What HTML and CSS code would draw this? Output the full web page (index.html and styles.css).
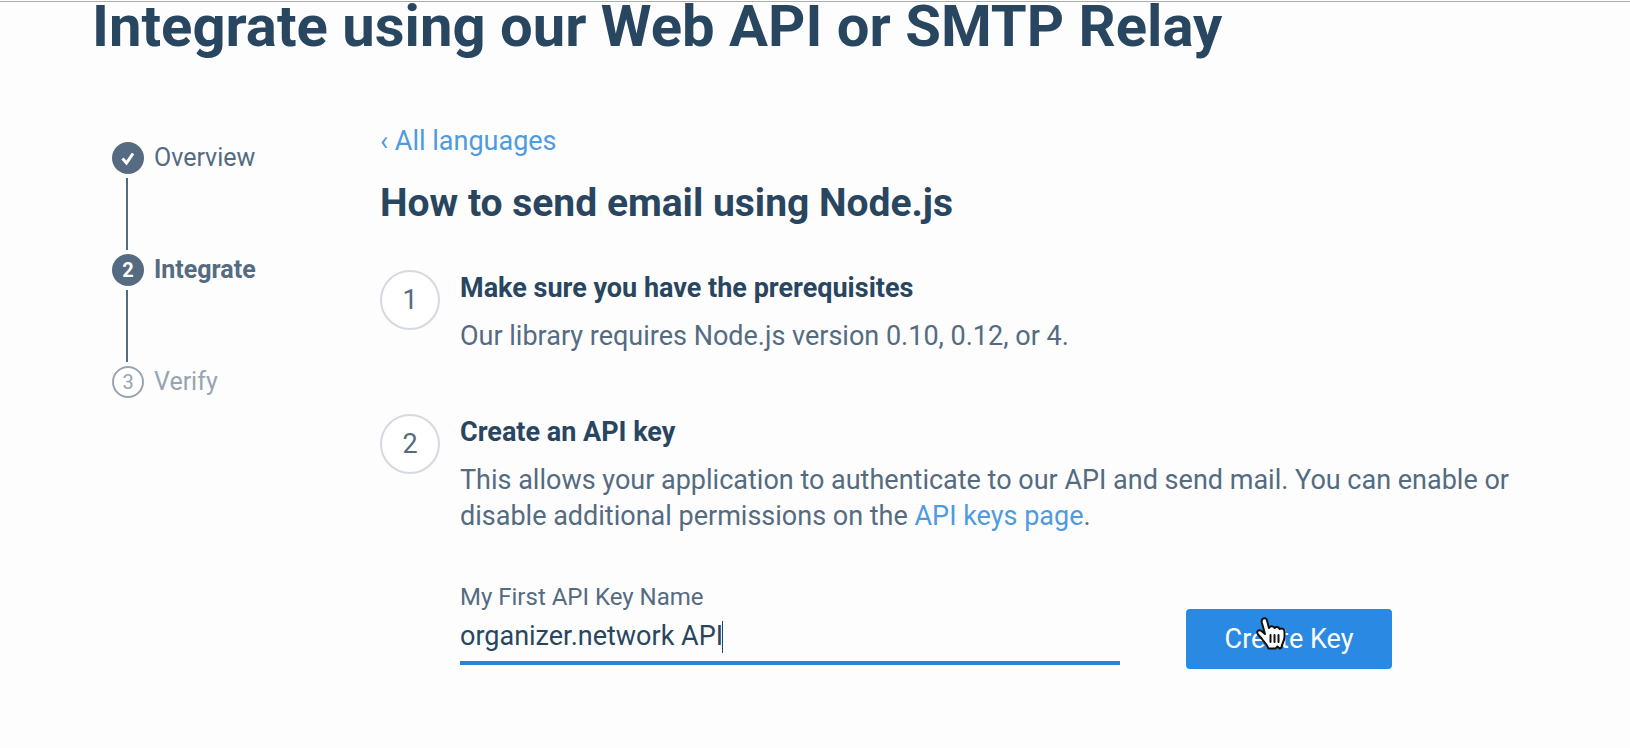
FILE: index.html
```html
<!DOCTYPE html>
<html lang="en">
<head>
<meta charset="utf-8">
<meta name="viewport" content="width=device-width, initial-scale=1">
<title>Integrate using our Web API or SMTP Relay</title>
<link rel="stylesheet" href="styles.css">
</head>
<body>
<div class="page">
  <h1 class="page-title">Integrate using our Web API or SMTP Relay</h1>
  <div class="layout">
    <nav aria-label="Setup progress">
      <ol class="progress">
        <li class="progress-item">
          <span class="progress-dot">
            <svg width="32" height="32" viewBox="0 0 32 32" aria-hidden="true"><path d="M10.500 16.500l4 4.500 6.500-9.500" fill="none" stroke="currentColor" stroke-width="3"/></svg>
          </span>
          <span>Overview</span>
        </li>
        <li class="progress-item current" aria-current="step">
          <span class="progress-dot">2</span>
          <span>Integrate</span>
        </li>
        <li class="progress-item upcoming">
          <span class="progress-dot">3</span>
          <span>Verify</span>
        </li>
      </ol>
    </nav>
    <main>
      <a class="link back" href="#">‹ All languages</a>
      <h2 class="guide-title">How to send email using Node.js</h2>
      <section class="step">
        <span class="step-number">1</span>
        <div>
          <h3 class="step-title">Make sure you have the prerequisites</h3>
          <p class="step-text">Our library requires Node.js version 0.10, 0.12, or 4.</p>
        </div>
      </section>
      <section class="step">
        <span class="step-number">2</span>
        <div>
          <h3 class="step-title">Create an API key</h3>
          <p class="step-text">This allows your application to authenticate to our API and send mail. You can enable or disable additional permissions on the <a class="link" href="#">API keys page</a>.</p>
          <form class="key-form">
            <div class="field">
              <label class="field-label" for="key-name">My First API Key Name</label>
              <input class="field-input" id="key-name" type="text" value="organizer.network API">
              <span class="caret"></span>
            </div>
            <button class="button" type="button">Create Key
              <svg class="pointer" width="32" height="36" viewBox="0 0 32 36" aria-hidden="true">
                <path d="M7.500 3C9 1.500 11.500 2 12 4.500L14 12C15 9.500 18.500 9.500 19.500 12C21 10.200 24 10.800 24.500 13C27 11.800 29.500 13 29.500 16V21C29.500 25 27 27 26.500 31.500L24.500 32.500L22.500 30.500L20.500 32.500H13.500C12 28 9 26 7 23L3 18.500C1 15.500 3.500 13 6.500 15L10 18L6.800 6.500C6.500 5 6.800 3.800 7.500 3Z" fill="#fff" stroke="#111" stroke-width="2" stroke-linejoin="round"/>
                <path d="M15.500 19v7M19.500 19v7M23.500 19v7" stroke="#111" stroke-width="2" stroke-linecap="round"/>
              </svg>
            </button>
          </form>
        </div>
      </section>
    </main>
  </div>
</div>
</body>
</html>
```
FILE: styles.css
```css
* { box-sizing: border-box; }

body {
  margin: 0;
  padding-top: 1px;
  background: #fdfdfd;
  color: #546b81;
  font-family: Roboto, "Liberation Sans", sans-serif;
  font-size: 27px;
  line-height: 36px;
}

h1, h2, h3, p, ol { margin: 0; padding: 0; }

.page {
  border-top: 1px solid #a9aeaa;
  padding: 0 84px 40px 92px;
}

.page-title {
  color: #294661;
  font-size: 58px;
  line-height: 48px;
}

.layout {
  display: grid;
  grid-template-columns: 268px 1fr;
  margin-top: 73px;
}

.progress {
  display: flex;
  flex-direction: column;
  gap: 80px;
  margin: 19px 0 0 20px;
  list-style: none;
  font-size: 25px;
  line-height: 32px;
}

.progress-item {
  position: relative;
  display: flex;
  gap: 10px;
}

.progress-item + .progress-item::before {
  content: "";
  position: absolute;
  left: 14px;
  bottom: 36px;
  width: 2px;
  height: 72px;
  background: #546b81;
}

.progress-dot {
  display: flex;
  justify-content: center;
  align-items: center;
  width: 32px;
  height: 32px;
  border-radius: 50%;
  background: #546b81;
  color: #fff;
  font-size: 20px;
}

.current { font-weight: 700; }
.upcoming { color: #98a5b0; }
.upcoming .progress-dot {
  border: 2px solid #98a5b0;
  background: #fff;
  color: #98a5b0;
}

.link { color: #4f9be0; text-decoration: none; }
.back { display: block; margin-left: 20px; }

.guide-title {
  margin: 18px 0 41px 20px;
  color: #294661;
  font-size: 39px;
  line-height: 52px;
}

.step {
  display: grid;
  grid-template-columns: 60px 1fr;
  gap: 20px;
  margin-left: 20px;
}

.step + .step { margin-top: 60px; }

.step-number {
  display: flex;
  justify-content: center;
  align-items: center;
  height: 60px;
  border: 2px solid #d4dae0;
  border-radius: 50%;
  background: #fff;
}

.step-title {
  margin-bottom: 12px;
  color: #294661;
  font-size: 27px;
  line-height: 36px;
}

.key-form {
  display: flex;
  align-items: flex-end;
  gap: 66px;
  margin-top: 45px;
}

.field {
  position: relative;
  flex: 0 1 660px;
  margin-bottom: 4px;
}

.field-label { display: block; font-size: 24px; }

.field-input {
  display: block;
  width: 100%;
  height: 50px;
  padding: 0 0 4px;
  border: 0;
  border-bottom: 4px solid #2387e0;
  outline: 0;
  background: none;
  color: #294661;
  font: inherit;
}

.caret {
  position: absolute;
  left: 262px;
  bottom: 12px;
  width: 1px;
  height: 32px;
  background: #294661;
}

.button {
  position: relative;
  width: 206px;
  height: 60px;
  border: 0;
  border-radius: 4px;
  background: #2a8ae3;
  color: #fff;
  font: inherit;
}

.pointer {
  position: absolute;
  left: 69px;
  top: 7px;
}
```
